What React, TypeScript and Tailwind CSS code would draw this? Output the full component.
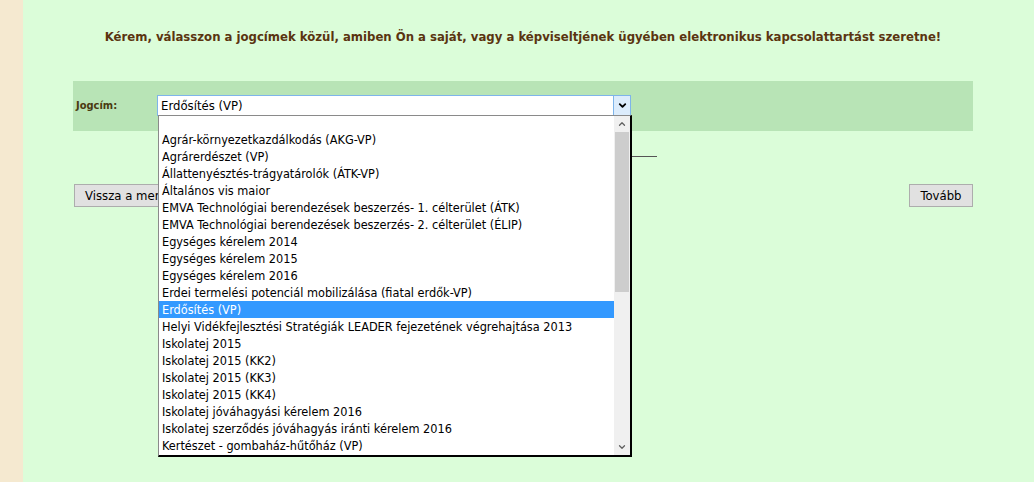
import { ChevronDown, ChevronUp } from 'lucide-react';

const options = [
  "",
  "Agrár-környezetkazdálkodás (AKG-VP)",
  "Agrárerdészet (VP)",
  "Állattenyésztés-trágyatárolók (ÁTK-VP)",
  "Általános vis maior",
  "EMVA Technológiai berendezések beszerzés- 1. célterület (ÁTK)",
  "EMVA Technológiai berendezések beszerzés- 2. célterület (ÉLIP)",
  "Egységes kérelem 2014",
  "Egységes kérelem 2015",
  "Egységes kérelem 2016",
  "Erdei termelési potenciál mobilizálása (fiatal erdők-VP)",
  "Erdősítés (VP)",
  "Helyi Vidékfejlesztési Stratégiák LEADER fejezetének végrehajtása 2013",
  "Iskolatej 2015",
  "Iskolatej 2015 (KK2)",
  "Iskolatej 2015 (KK3)",
  "Iskolatej 2015 (KK4)",
  "Iskolatej jóváhagyási kérelem 2016",
  "Iskolatej szerződés jóváhagyás iránti kérelem 2016",
  "Kertészet - gombaház-hűtőház (VP)",
];

const selected = "Erdősítés (VP)";

const App = () => {
  return (
    <div className="flex min-h-[482px] bg-[#dbfdd9] font-['DejaVu_Sans_Condensed','DejaVu_Sans',sans-serif]">
      <div className="w-[23px] shrink-0 bg-[#f5e9d0]" />
      <div className="flex-1">
        <div className="ml-[50px] w-[900px]">
          <h1 className="pt-[27px] h-[81px] text-center text-[13px] font-bold text-[#5a3410]">
            Kérem, válasszon a jogcímek közül, amiben Ön a saját, vagy a képviseltjének ügyében elektronikus kapcsolattartást szeretne!
          </h1>

          <div className="flex h-[50px] items-center bg-[#b8e4b6]">
            <span className="ml-[3px] w-[81px] text-[11px] font-bold text-[#4a3a10]">Jogcím:</span>
            <div className="relative -mt-[1px]">
              <div className="flex h-[21px] w-[474px] border border-[#7eb4ea] bg-white">
                <span className="flex-1 pl-[3px] text-[13px] leading-[19px] text-black">{selected}</span>
                <span className="flex w-[17px] items-center justify-center border-l border-[#7eb4ea] bg-[#dcecfc]">
                  <ChevronDown size={11} strokeWidth={4} className="text-black" />
                </span>
              </div>

              <div className="absolute left-[1px] top-[20px] z-10 flex h-[342px] w-[474px] border-l border-t border-[#8a8a8a] border-r-2 border-b-2 border-r-black border-b-black bg-white">
                <ul className="flex-1">
                  {options.map((o, i) => (
                    <li
                      key={i}
                      className={
                        (i === 0 ? "h-[15px] " : "h-[17px] ") +
                        "whitespace-nowrap pl-[3px] text-[12.6px] leading-[17px] " +
                        (o === selected ? "bg-[#3399ff] text-white" : "text-black")
                      }
                    >
                      {o}
                    </li>
                  ))}
                </ul>
                <div className="flex w-[16px] flex-col bg-[#f0f0f0]">
                  <div className="flex h-[16px] items-center justify-center">
                    <ChevronUp size={10} strokeWidth={3} className="text-[#606060]" />
                  </div>
                  <div className="mx-[1px] h-[160px] bg-[#cdcdcd]" />
                  <div className="flex-1" />
                  <div className="flex h-[16px] items-center justify-center">
                    <ChevronDown size={10} strokeWidth={3} className="text-[#606060]" />
                  </div>
                </div>
              </div>
            </div>
          </div>

          <div className="ml-[87px] mt-[25px] h-[1px] w-[497px] bg-[#555]" />

          <div className="mt-[27px] flex justify-between">
            <button className="ml-[1px] h-[23px] border border-[#adadad] bg-[#e1e1e1] px-[10px] text-[13px] text-black">
              Vissza a menübe
            </button>
            <button className="h-[23px] w-[64px] border border-[#adadad] bg-[#e1e1e1] text-[13px] text-black">
              Tovább
            </button>
          </div>
        </div>
      </div>
    </div>
  );
};

export default App;
